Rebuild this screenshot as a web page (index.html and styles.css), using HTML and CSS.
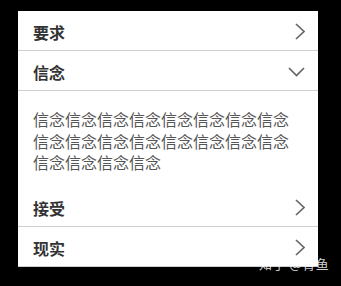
FILE: index.html
```html
<!DOCTYPE html>
<html lang="zh-CN">
<head>
<meta charset="utf-8">
<link rel="stylesheet" href="styles.css">
</head>
<body>
<div class="stage">
  <div class="panel">
    <div class="row">
      <span class="title">要求</span>
      <svg class="chev-right" width="10" height="17" viewBox="0 0 10 17"><polyline points="1,1 9,8.5 1,16" fill="none" stroke="#666" stroke-width="1.7"/></svg>
    </div>
    <div class="row">
      <span class="title">信念</span>
      <svg class="chev-down" width="17" height="10" viewBox="0 0 17 10"><polyline points="1,1 8.5,8.5 16,1" fill="none" stroke="#666" stroke-width="1.7"/></svg>
    </div>
    <div class="content">信念信念信念信念信念信念信念信念信念信念信念信念信念信念信念信念信念信念信念信念</div>
    <div class="row">
      <span class="title">接受</span>
      <svg class="chev-right" width="10" height="17" viewBox="0 0 10 17"><polyline points="1,1 9,8.5 1,16" fill="none" stroke="#666" stroke-width="1.7"/></svg>
    </div>
    <div class="row">
      <span class="title">现实</span>
      <svg class="chev-right" width="10" height="17" viewBox="0 0 10 17"><polyline points="1,1 9,8.5 1,16" fill="none" stroke="#666" stroke-width="1.7"/></svg>
    </div>
  </div>
  <div class="watermark">知乎 @青鱼</div>
</div>
</body>
</html>
```
FILE: styles.css
```css
html, body {
  margin: 0;
  padding: 0;
  background: #000;
}
.stage {
  position: relative;
  width: 341px;
  height: 286px;
  padding: 11px 0 0 18px;
  box-sizing: border-box;
  font-family: "Noto Sans CJK SC", "Noto Sans", sans-serif;
}
.panel {
  width: 300px;
  background: #fff;
}
.row {
  height: 39px;
  border-bottom: 1px solid #cfcfcf;
  display: flex;
  align-items: center;
  justify-content: space-between;
  padding: 0 13px 0 15px;
}
.title {
  font-size: 16px;
  font-weight: bold;
  color: #333;
  line-height: 1;
  padding-top: 2px;
}
.chev-right {
  display: block;
  margin-top: 1px;
}
.chev-down {
  display: block;
  margin-top: 3px;
}
.content {
  height: 96px;
  box-sizing: border-box;
  padding: 18px 15px 0 15px;
  font-size: 16px;
  line-height: 21.5px;
  color: #555;
  word-break: break-all;
}
.watermark {
  position: absolute;
  left: 259px;
  top: 254px;
  font-size: 13px;
  letter-spacing: 0.5px;
  color: rgba(255, 255, 255, 0.82);
  white-space: nowrap;
}
```
